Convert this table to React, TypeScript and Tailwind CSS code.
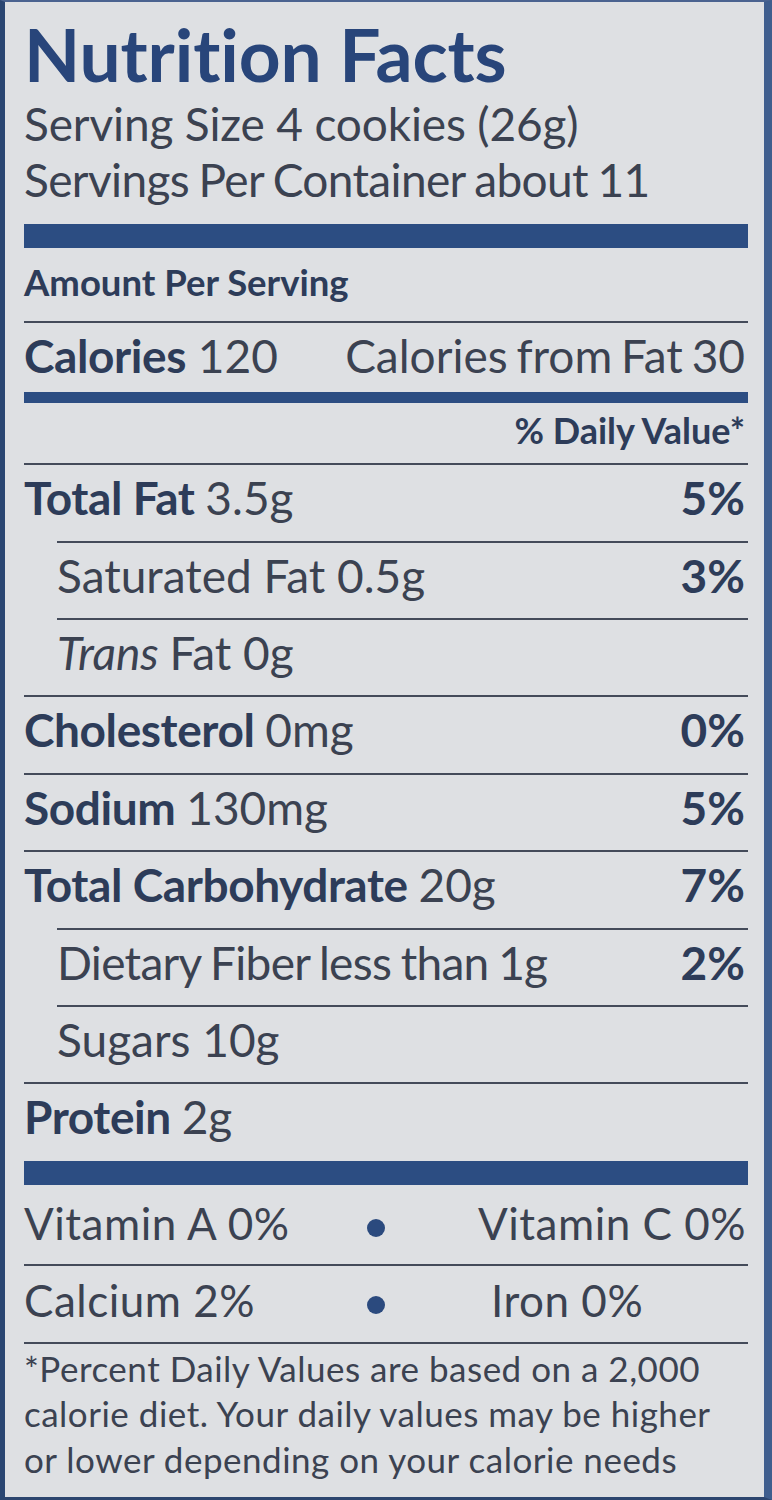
type Nutrient = {
  label: string
  amount: string
  dv?: string
  bold?: boolean
  indent?: boolean
  italic?: string
  tight?: boolean
  rule: "full" | "indent" | "none"
}

const nutrients: Nutrient[] = [
  { label: "Total Fat", amount: "3.5g", dv: "5%", bold: true, rule: "indent" },
  { label: "Saturated Fat", amount: "0.5g", dv: "3%", indent: true, rule: "indent" },
  { label: "Fat", italic: "Trans", amount: "0g", indent: true, rule: "full" },
  { label: "Cholesterol", amount: "0mg", dv: "0%", bold: true, rule: "full" },
  { label: "Sodium", amount: "130mg", dv: "5%", bold: true, rule: "full" },
  { label: "Total Carbohydrate", amount: "20g", dv: "7%", bold: true, rule: "indent" },
  { label: "Dietary Fiber", amount: "less than 1g", dv: "2%", indent: true, tight: true, rule: "indent" },
  { label: "Sugars", amount: "10g", indent: true, rule: "full" },
  { label: "Protein", amount: "2g", bold: true, rule: "none" },
]

function Rule({ indent = false }: { indent?: boolean }) {
  return <div className={indent ? "h-[2px] ml-[33px] bg-[#444b5a]" : "h-[2px] bg-[#444b5a]"} />
}

function NutrientRow({ n, last }: { n: Nutrient; last: boolean }) {
  return (
    <>
      <div
        className={`flex justify-between items-start text-[46px] leading-none pt-[10px] ${last ? "h-[76.5px]" : "h-[75.4px]"} ${n.indent ? "pl-[33px]" : ""}`}
      >
        <div
          className={`whitespace-nowrap text-[#3b4251] ${n.tight ? "tracking-[-0.7px] [word-spacing:-1.5px]" : ""}`}
        >
          {n.bold && <span className="font-bold text-[#2d3c59] tracking-[-0.4px]">{n.label} </span>}
          {n.italic && <span className="italic">{n.italic} </span>}
          {!n.bold && <span>{n.label} </span>}
          <span>{n.amount}</span>
        </div>
        {n.dv && <div className="font-bold text-[#2d3c59] pr-[3px]">{n.dv}</div>}
      </div>
      {n.rule !== "none" && <Rule indent={n.rule === "indent"} />}
    </>
  )
}

function Dot() {
  return <div className="w-[18px] h-[18px] mt-[18px] rounded-full bg-[#2b4a7e] shrink-0" />
}

export default function App() {
  return (
    <div className="w-[772px] h-[1500px] overflow-hidden box-border bg-[#dee0e3] border-l-[5px] border-l-[#2a4672] border-t-[2px] border-t-[#4a6390] border-r-[8px] border-r-[#3f5e8e] border-b-[3px] border-b-[#2d466f] pl-[19px] pr-[16px] pt-[16px] font-['Lato',sans-serif]">
      {/* header */}
      <h1 className="text-[73px] leading-[73px] font-bold text-[#28457a] whitespace-nowrap tracking-[-0.1px]">
        Nutrition Facts
      </h1>
      <div className="mt-[4.5px] text-[46px] leading-[56.6px] text-[#3b4251] whitespace-nowrap">
        <div className="tracking-[-0.15px]">Serving Size 4 cookies (26g)</div>
        <div className="tracking-[-0.65px] [word-spacing:-1.5px]">Servings Per Container about 11</div>
      </div>

      <div className="mt-[15.3px] h-[24px] bg-[#2c4d82]" />

      <div className="h-[73px] pt-[16px] text-[36.5px] leading-none font-bold text-[#2d3c59] whitespace-nowrap">
        Amount Per Serving
      </div>
      <Rule />

      <div className="h-[69px] pt-[10px] flex justify-between text-[46px] leading-none text-[#3b4251] whitespace-nowrap">
        <div>
          <span className="font-bold text-[#2d3c59] tracking-[-0.4px]">Calories</span> 120
        </div>
        <div className="pr-[3px] [word-spacing:-3px]">Calories from Fat 30</div>
      </div>

      <div className="h-[11px] bg-[#2c4d82]" />

      <div className="h-[60.3px] pt-[9px] text-right pr-[3px] text-[36px] leading-none font-bold text-[#2d3c59] whitespace-nowrap">
        % Daily Value*
      </div>
      <Rule />

      {nutrients.map((n, i) => (
        <NutrientRow key={n.label + i} n={n} last={i === nutrients.length - 1} />
      ))}

      <div className="h-[24px] bg-[#2c4d82]" />

      {/* vitamins */}
      <div className="h-[79px] pt-[16.5px] flex items-start text-[44px] leading-none tracking-[0.5px] text-[#3b4251] whitespace-nowrap">
        <div className="w-[343px]">Vitamin A 0%</div>
        <Dot />
        <div className="flex-1 text-right pr-[2px]">Vitamin C 0%</div>
      </div>
      <Rule />
      <div className="h-[75.7px] pt-[12px] flex items-start text-[44px] leading-none tracking-[0.5px] text-[#3b4251] whitespace-nowrap">
        <div className="w-[343px]">Calcium 2%</div>
        <Dot />
        <div className="flex-1 pl-[106px]">Iron 0%</div>
      </div>
      <Rule />

      <div className="pt-[2.4px] text-[35px] leading-[45.5px] tracking-[0.5px] text-[#3b4251] whitespace-nowrap">
        <div>*Percent Daily Values are based on a 2,000</div>
        <div>calorie diet. Your daily values may be higher</div>
        <div>or lower depending on your calorie needs</div>
      </div>
    </div>
  )
}
